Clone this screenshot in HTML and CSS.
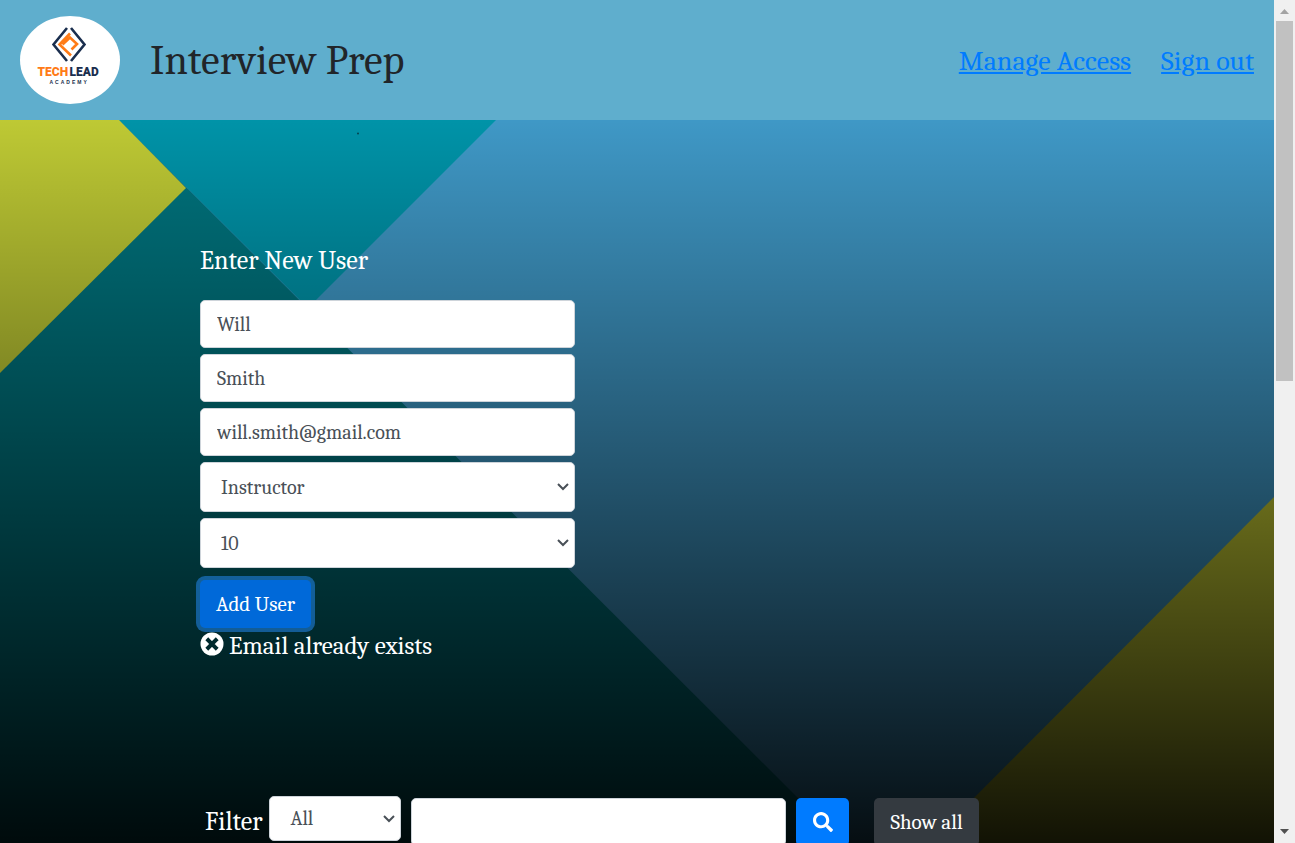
FILE: index.html
```html
<!DOCTYPE html>
<html lang="en">
<head>
<meta charset="utf-8">
<title>Interview Prep</title>
<link rel="stylesheet" href="styles.css">
</head>
<body>
<div class="viewport">
  <div class="page">
    <header class="header">
      <svg class="logo" viewBox="0 0 100 88" role="img" aria-label="Tech Lead Academy">
        <ellipse cx="50" cy="44" rx="50" ry="44" fill="#fff"/>
        <g fill="none" stroke-width="2.6">
          <path d="M47 12 33.500 28.500 47 45M51 12 64.500 28.500 51 45" stroke="#1a2e4e"/>
          <path d="M50 17.500 39.500 28.500 51 39.500M42.500 28.500 50 21.500l7 6.500-5.500 5.500" stroke="#ff7b17"/>
        </g>
        <text class="logo-name" x="17.500" y="59.500" fill="#ff7b17">TECH</text>
        <text class="logo-name" x="49.500" y="59.500" fill="#1a2e4e">LEAD</text>
        <text class="logo-sub" x="29.500" y="68" fill="#1a2e4e">ACADEMY</text>
      </svg>
      <h1 class="title">Interview Prep</h1>
      <nav class="nav">
        <a href="#access">Manage Access</a>
        <a href="#signout">Sign out</a>
      </nav>
    </header>
    <main class="main">
      <svg class="backdrop" viewBox="0 0 1274 723" preserveAspectRatio="none" aria-hidden="true">
        <defs>
          <linearGradient id="shade" x1="0" y1="0" x2="0" y2="1">
            <stop offset="0" stop-color="#000" stop-opacity="0"/>
            <stop offset="1" stop-color="#000" stop-opacity=".91"/>
          </linearGradient>
        </defs>
        <path d="M0 0h1274v723H0z" fill="#3f98c6"/>
        <path d="M0 0h119l724 723H0z" fill="#00747e"/>
        <path d="M119 0h377L308 188z" fill="#0093a8"/>
        <path d="M0 0h119l67 68L0 253z" fill="#bec934"/>
        <path d="M1274 377v346H929z" fill="#c6cc33"/>
        <path d="M0 0h1274v723H0z" fill="url(#shade)"/>
        <circle cx="358" cy="13.500" r="1" fill="#04434d"/>
      </svg>
      <form class="user-form">
        <h2 class="form-title">Enter New User</h2>
        <input class="control" type="text" aria-label="First name" value="Will">
        <input class="control" type="text" aria-label="Last name" value="Smith">
        <input class="control" type="email" aria-label="Email" value="will.smith@gmail.com">
        <div class="picker">
          <select class="control" aria-label="Role"><option>Instructor</option></select>
          <svg class="caret" viewBox="0 0 12 8"><path d="M1 1l5 5 5-5"/></svg>
        </div>
        <div class="picker">
          <select class="control" aria-label="Batch"><option>10</option></select>
          <svg class="caret" viewBox="0 0 12 8"><path d="M1 1l5 5 5-5"/></svg>
        </div>
        <button class="button add" type="button">Add User</button>
        <p class="message" role="alert">
          <svg class="error-icon" viewBox="0 0 24 24" aria-hidden="true"><circle cx="12" cy="12" r="11.500" fill="#fff"/><path d="M8.200 8.200l7.600 7.600M15.800 8.200l-7.600 7.600" stroke="#002a2e" stroke-width="4" stroke-linecap="square"/></svg>
          Email already exists
        </p>
      </form>
      <form class="filter">
        <label for="filter-by">Filter</label>
        <div class="picker small">
          <select class="control" id="filter-by"><option>All</option></select>
          <svg class="caret" viewBox="0 0 12 8"><path d="M1 1l5 5 5-5"/></svg>
        </div>
        <input class="control query" type="text" aria-label="Search users">
        <button class="button search" type="button" aria-label="Search">
          <svg class="search-icon" viewBox="0 0 512 512"><path fill="#fff" d="M505 442.700 405.300 343c-4.500-4.500-10.600-7-17-7H372c27.600-35.300 44-79.700 44-128C416 93.100 322.900 0 208 0S0 93.100 0 208s93.100 208 208 208c48.300 0 92.700-16.400 128-44v16.300c0 6.400 2.500 12.500 7 17l99.700 99.700c9.400 9.400 24.600 9.400 33.900 0l28.300-28.300c9.400-9.400 9.400-24.600.1-34zM208 336c-70.700 0-128-57.200-128-128 0-70.700 57.200-128 128-128 70.700 0 128 57.200 128 128 0 70.700-57.200 128-128 128z"/></svg>
        </button>
        <button class="button dark" type="button">Show all</button>
      </form>
    </main>
  </div>
  <div class="scrollbar" aria-hidden="true">
    <svg class="arrow" viewBox="0 0 21 21"><path d="M6 14h9l-4.500-5z" fill="#a3a3a3"/></svg>
    <div class="track"><div class="thumb"></div></div>
    <svg class="arrow" viewBox="0 0 21 21"><path d="M6 7h9l-4.500 5z" fill="#505050"/></svg>
  </div>
</div>
</body>
</html>
```
FILE: styles.css
```css
* { box-sizing: border-box; }
body {
  margin: 0;
  font-family: Cambria, "DejaVu Serif Condensed", "Liberation Serif", serif;
  font-size: 20px;
}
.viewport { display: flex; height: 100vh; overflow: hidden; }
.page { flex: 1; min-width: 0; display: flex; flex-direction: column; }
.header {
  flex: none;
  display: flex;
  align-items: center;
  padding: 16px 20px;
  background: #5faecd;
}
.logo { width: 100px; height: 88px; }
.logo-name { font: 900 12px Roboto, sans-serif; }
.logo-sub { font: 700 5px "Liberation Sans", sans-serif; letter-spacing: 2px; }
.title { margin: 0 0 0 30px; color: #212529; font-size: 42px; font-weight: 400; }
.nav { display: flex; gap: 30px; margin-left: auto; padding-top: 2px; font-size: 28px; }
.nav a { color: #007bff; }
.main {
  position: relative;
  flex: 1;
  min-height: 0;
  padding: 120px 200px 0;
  color: #fff;
}
.backdrop { position: absolute; inset: 0; width: 100%; height: 100%; }
.user-form {
  position: relative;
  display: flex;
  flex-direction: column;
  gap: 6px;
  width: 375px;
}
.form-title { margin: 0 0 12px; font-size: 26px; line-height: 42px; font-weight: 400; }
.control {
  display: block;
  width: 100%;
  height: 48px;
  padding: 0 16px;
  border: 1px solid #ced4da;
  border-radius: 5px;
  background: #fff;
  color: #495057;
  font: inherit;
}
.picker { position: relative; }
.picker .control { height: 50px; padding: 0 20px; appearance: none; }
.caret {
  position: absolute;
  top: 50%;
  right: 6px;
  width: 12px;
  height: 8px;
  margin-top: -4px;
  fill: none;
  stroke: #495057;
  stroke-width: 2;
  pointer-events: none;
}
.button {
  flex: none;
  height: 48px;
  padding: 0 16px;
  border: 0;
  border-radius: 5px;
  background: #007bff;
  color: #fff;
  font: inherit;
  font-size: 21px;
}
.add {
  align-self: flex-start;
  margin-top: 6px;
  background: #0069d9;
  box-shadow: 0 0 0 4px rgba(38, 143, 255, .5);
}
.message {
  display: flex;
  align-items: flex-start;
  gap: 5px;
  margin: -2px 0 0;
  font-size: 25px;
  line-height: 28px;
}
.error-icon { width: 24px; height: 24px; }
.filter {
  position: relative;
  display: flex;
  align-items: flex-start;
  margin-top: 136px;
  padding-left: 5px;
}
.filter label { font-size: 26px; line-height: 52px; margin-right: 7px; }
.picker.small { flex: none; width: 132px; }
.picker.small .control { height: 45px; }
.query { flex: none; width: 375px; margin: 2px 10px 0; }
.search { width: 53px; margin-top: 2px; }
.search-icon { display: block; width: 20px; height: 20px; margin: auto; }
.dark { margin: 2px 0 0 25px; background: #343a40; }
.scrollbar { display: flex; flex-direction: column; width: 21px; background: #f0f0f0; }
.arrow { flex: none; width: 21px; height: 21px; }
.track { flex: 1; padding: 0 2px; }
.thumb { height: 45%; background: #c1c1c1; }
```
